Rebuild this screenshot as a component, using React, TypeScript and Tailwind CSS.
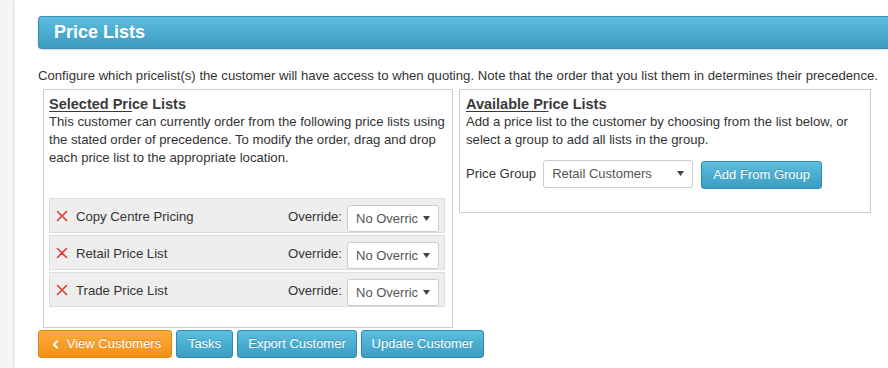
import { ChevronLeft } from 'lucide-react'

const rows = ['Copy Centre Pricing', 'Retail Price List', 'Trade Price List']

const blueBtn =
  'h-[28px] whitespace-nowrap rounded-[3px] border border-[#2f8bb0] bg-gradient-to-b from-[#5bbfe0] to-[#3b9dc2] text-[13px] text-white [text-shadow:0_-1px_0_rgba(0,0,0,0.2)]'

const RedX = () => (
  <svg width="12" height="12" viewBox="0 0 12 12" className="shrink-0">
    <path d="M1.5 1.5 L10.5 10.5 M10.5 1.5 L1.5 10.5" stroke="#e23a30" strokeWidth="1.6" strokeLinecap="round" />
  </svg>
)

const Caret = () => (
  <svg width="7" height="5" viewBox="0 0 7 5" className="shrink-0">
    <path d="M0 0 H7 L3.5 5 Z" fill="#444" />
  </svg>
)

const SelectBox = ({ value, className }: { value: string; className: string }) => (
  <div
    className={
      'flex items-center justify-between overflow-hidden rounded-[3px] border border-[#cccccc] bg-white pl-[8px] pr-[8px] text-[13px] text-[#555] ' +
      className
    }
  >
    <span className="overflow-hidden whitespace-nowrap">{value}</span>
    <Caret />
  </div>
)

export default function App() {
  return (
    <div className="flex h-[368px] w-[888px] overflow-hidden bg-white font-['Liberation_Sans',Arial,sans-serif] text-[13.15px] text-[#333]">
      <div className="w-[14px] shrink-0 border-r border-[#e2e2e2] bg-[#f5f5f5] shadow-[1px_0_2px_rgba(0,0,0,0.06)]" />
      <div className="flex-1 pl-[24px] pt-[16px]">
        <div className="flex h-[33px] items-center rounded-l-[4px] border border-r-0 border-[#3a8eb1] bg-gradient-to-b from-[#5cbde0] to-[#3c9cc0] pl-[15px] shadow-[0_1px_2px_rgba(0,0,0,0.15)]">
          <h1 className="text-[18px] font-bold text-white">Price Lists</h1>
        </div>

        <p className="mt-[18px] whitespace-nowrap leading-[18px]">
          Configure which pricelist(s) the customer will have access to when quoting. Note that the order that you list them in determines their precedence.
        </p>

        <div className="ml-[5px] mt-[4px] flex items-start gap-[6px]">
          <div className="h-[239px] w-[410px] border border-[#cccccc] pl-[5px] pr-[4px] pt-[5px]">
            <h2 className="text-[14.5px] font-bold leading-[18px] text-[#3a3a3a]">
              <span className="underline decoration-1 underline-offset-2">Selected Pri</span>ce Lists
            </h2>
            <p className="leading-[18px]">
              This customer can currently order from the following price lists using the stated order of precedence. To modify the order, drag and drop each price list to the appropriate location.
            </p>
            <div className="mr-[3px] mt-[31px] flex flex-col gap-[2px]">
              {rows.map((r) => (
                <div key={r} className="flex h-[35px] items-start border border-[#dddddd] bg-[#eeeeee] pl-[6px] pr-[5px]">
                  <div className="mt-[11px]">
                    <RedX />
                  </div>
                  <span className="ml-[8px] mt-[8px] flex-1">{r}</span>
                  <span className="mt-[8px]">Override:</span>
                  <SelectBox value="No Overric" className="ml-[5px] mt-[6px] h-[27px] w-[92px]" />
                </div>
              ))}
            </div>
          </div>

          <div className="h-[124px] w-[412px] border border-[#cccccc] px-[6px] pt-[5px]">
            <h2 className="text-[14.5px] font-bold leading-[18px] text-[#3a3a3a]">
              <span className="underline decoration-1 underline-offset-2">Available Pr</span>ice Lists
            </h2>
            <p className="leading-[18px]">
              Add a price list to the customer by choosing from the list below, or select a group to add all lists in the group.
            </p>
            <div className="mt-[9px] flex items-center">
              <span>Price Group</span>
              <SelectBox value="Retail Customers" className="ml-[7px] h-[28px] w-[150px]" />
              <button className={blueBtn + ' ml-[8px] mt-[3px] w-[121px]'}>Add From Group</button>
            </div>
          </div>
        </div>

        <div className="mt-[2px] flex gap-[4px]">
          <button className="flex h-[28px] w-[134px] items-center justify-center gap-[5px] whitespace-nowrap rounded-[3px] border border-[#e08a10] bg-gradient-to-b from-[#fbac3a] to-[#f3900f] text-[13px] text-white [text-shadow:0_-1px_0_rgba(0,0,0,0.2)]">
            <ChevronLeft size={13} strokeWidth={3.5} />
            View Customers
          </button>
          <button className={blueBtn + ' w-[57px]'}>Tasks</button>
          <button className={blueBtn + ' w-[120px]'}>Export Customer</button>
          <button className={blueBtn + ' w-[123px]'}>Update Customer</button>
        </div>
      </div>
    </div>
  )
}
